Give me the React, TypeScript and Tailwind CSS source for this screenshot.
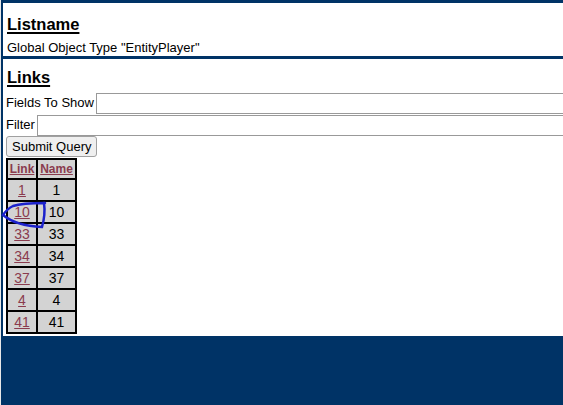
import React from "react";

const rows = ["1", "10", "33", "34", "37", "4", "41"];

function Cell({ children, link }: { children: React.ReactNode; link?: boolean }) {
  return (
    <div
      className={
        "flex h-[20px] items-center justify-center bg-[#d3d3d3] text-[14px] " +
        (link ? "text-[#8a3b4e] underline" : "text-black")
      }
    >
      {children}
    </div>
  );
}

export default function App() {
  return (
    <div
      className="relative h-[405px] w-[563px] overflow-hidden border-l border-[#e8e8e8] bg-[#003366] pl-[2px] pt-[3px] text-black"
      style={{ fontFamily: '"Liberation Sans", Arial, sans-serif' }}
    >
      {/* Listname panel */}
      <div className="h-[53px] w-[600px] bg-white pl-[4px]">
        <div className="pt-[12px] text-[16.5px] font-bold leading-[18px] underline decoration-2 underline-offset-[2px]">
          Listname
        </div>
        <div className="mt-[7px] text-[13px] leading-[15px]">
          Global Object Type &quot;EntityPlayer&quot;
        </div>
      </div>

      {/* Links panel */}
      <div className="mt-[3px] h-[277px] w-[600px] bg-white pl-[3px]">
        <div className="pl-[1px] pt-[9px] text-[16.5px] font-bold leading-[18px] underline decoration-2 underline-offset-[2px]">
          Links
        </div>
        <div className="mt-[6px] flex h-[22px] items-center text-[13px]">
          <span className="mr-[2px]">Fields To Show</span>
          <input className="h-[21px] w-[500px] border border-[#999] bg-white" />
        </div>
        <div className="flex h-[22px] items-center text-[13px]">
          <span className="mr-[2px]">Filter</span>
          <input className="h-[21px] w-[560px] border border-[#999] bg-white" />
        </div>
        <button className="block h-[21px] rounded-[3px] border border-[#a0a0a0] bg-[#efefef] px-[5px] text-[13px] leading-none">
          Submit Query
        </button>
        <div className="mt-[1px] grid w-[71px] grid-cols-[28px_37px] gap-[2px] bg-black p-[2px]">
          <div className="flex h-[18px] items-center justify-center bg-[#d3d3d3] text-[12px] font-bold text-[#8a3b4e] underline">
            Link
          </div>
          <div className="flex h-[18px] items-center justify-center bg-[#d3d3d3] text-[12px] font-bold text-[#8a3b4e] underline">
            Name
          </div>
          {rows.map((r) => (
            <React.Fragment key={r}>
              <Cell link>{r}</Cell>
              <Cell>{r}</Cell>
            </React.Fragment>
          ))}
        </div>
      </div>

      {/* hand-drawn annotation around "10" */}
      <svg className="absolute left-0 top-[200px]" width="50" height="32" viewBox="0 0 50 32">
        <path
          d="M44 3 C32 3 18 4 12 6 C8 8 4 12 2 15 C8 20 20 26 41 27 C43 20 44 10 43 3"
          fill="none"
          stroke="#1c22cc"
          strokeWidth="2.5"
          strokeLinecap="round"
        />
      </svg>
    </div>
  );
}
